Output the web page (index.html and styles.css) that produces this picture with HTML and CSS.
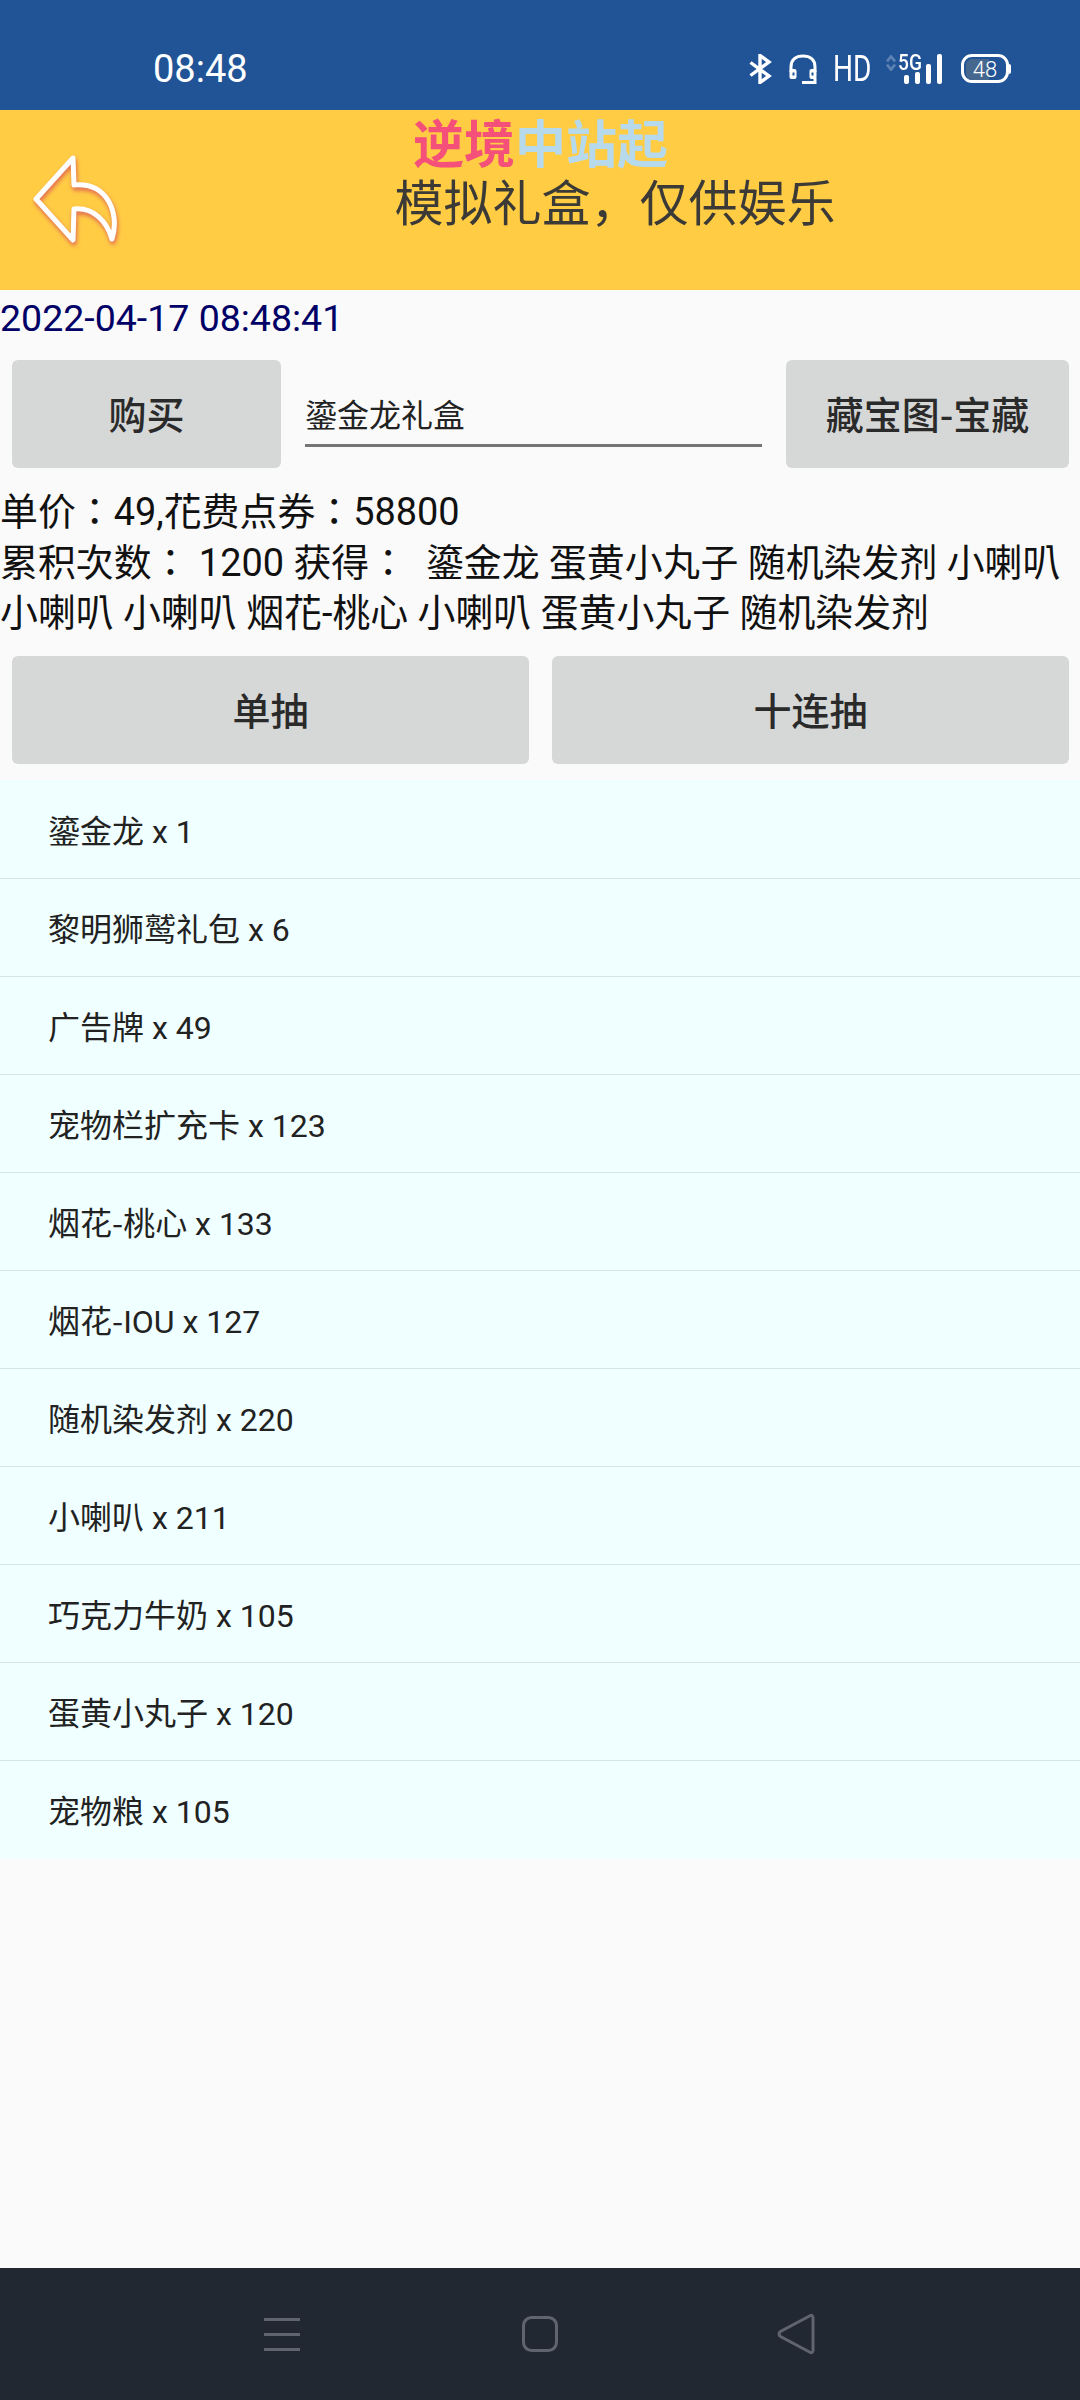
FILE: index.html
```html
<!DOCTYPE html>
<html lang="zh-Hans">
<head>
<meta charset="utf-8">
<title>模拟礼盒</title>
<link rel="stylesheet" href="styles.css">
</head>
<body>
<div class="screen">
  <div class="status">
    <span class="clock">08:48</span>
    <div class="status-icons">
      <svg width="23" height="30" viewBox="0 0 23 30"><path d="M1.5 8.5 L20 22 L11 28.5 V1.5 L20 8 L1.5 21.5" fill="none" stroke="#fff" stroke-width="3.4"/></svg>
      <svg width="28" height="30" viewBox="0 0 28 30"><path d="M2 18 V13 C2 5.500 7 2 14 2 S26 5.500 26 13 V18" fill="none" stroke="#fff" stroke-width="3"/><rect x="0.500" y="15" width="7" height="10" rx="2" fill="#fff"/><rect x="3.500" y="18.500" width="2" height="3" fill="#215497"/><rect x="20.500" y="15" width="7" height="10" rx="2" fill="#fff"/><rect x="22.500" y="18.500" width="2" height="3" fill="#215497"/><path d="M13 28.500 H26 V24" fill="none" stroke="#fff" stroke-width="3"/></svg>
      <span class="hd"><span class="hd-text">HD</span></span>
      <div class="net">
        <svg class="net-arrows" width="10" height="16" viewBox="0 0 10 16"><path d="M1 6.500 L5 1.500 L9 6.500 M1 9.500 L5 14.500 L9 9.500" fill="none" stroke="#5d82b3" stroke-width="2.800"/></svg>
        <span class="fiveg">5G</span>
        <div class="bars">
          <i class="bar b1"></i><i class="bar b2"></i><i class="bar b3"></i><i class="bar b4"></i>
        </div>
      </div>
      <div class="battery"><div class="batt-body"><span class="batt-fill">48</span></div><i class="batt-nub"></i></div>
    </div>
  </div>
  <header class="appbar">
    <svg class="back" width="100" height="100" viewBox="0 0 100 100"><path d="M41 4 L4 45 L41 86 L42 55 C62 53 75 68 80 85 C88 60 76 28 42 31 Z" fill="none" stroke="#fff" stroke-width="5" stroke-linejoin="round"/></svg>
    <div class="brand"><span class="brand-a">逆境</span><span class="brand-b">中站起</span></div>
    <h1 class="title">模拟礼盒，仅供娱乐</h1>
  </header>
  <main class="content">
    <div class="date">2022-04-17 08:48:41</div>
    <div class="buy-row">
      <button class="btn btn-buy">购买</button>
      <div class="field">鎏金龙礼盒</div>
      <button class="btn btn-map">藏宝图<span class="hy">-</span>宝藏</button>
    </div>
    <p class="info" lang="zh-Hant">单价：49,花费点券：58800<br>累积次数： 1200 获得：&nbsp; 鎏金龙 蛋黄小丸子 随机染发剂 小喇叭 小喇叭 小喇叭 烟花-桃心 小喇叭 蛋黄小丸子 随机染发剂</p>
    <div class="draw-row">
      <button class="btn">单抽</button>
      <button class="btn">十连抽</button>
    </div>
    <ul class="list">
      <li>鎏金龙 x 1</li>
      <li>黎明狮鹫礼包 x 6</li>
      <li>广告牌 x 49</li>
      <li>宠物栏扩充卡 x 123</li>
      <li>烟花<span class="hy">-</span>桃心 x 133</li>
      <li>烟花<span class="hy">-</span>IOU x 127</li>
      <li>随机染发剂 x 220</li>
      <li>小喇叭 x 211</li>
      <li>巧克力牛奶 x 105</li>
      <li>蛋黄小丸子 x 120</li>
      <li>宠物粮 x 105</li>
    </ul>
  </main>
  <nav class="navbar">
    <svg width="36" height="33" viewBox="0 0 36 33"><path d="M0 1.500 H36 M0 16.500 H36 M0 31.500 H36" stroke="#5f646e" stroke-width="3"/></svg>
    <svg class="nav-home" width="36" height="36" viewBox="0 0 36 36"><rect x="1.500" y="1.500" width="33" height="33" rx="8" fill="none" stroke="#5f646e" stroke-width="3"/></svg>
    <svg class="nav-back" width="38" height="42" viewBox="0 0 38 42"><path d="M32.500 3 Q36 1 36 5 V37 Q36 41 32.500 39 L3.500 23.500 Q0.500 21 3.500 18.500 Z" fill="none" stroke="#5f646e" stroke-width="3"/></svg>
  </nav>
</div>
</body>
</html>
```
FILE: styles.css
```css
* { box-sizing: border-box; }
html, body { margin: 0; padding: 0; }
body { font-family: Roboto, "Noto Sans CJK SC", sans-serif; background: #fafafa; }
.screen { width: 1080px; height: 2400px; display: flex; flex-direction: column; background: #fafafa; overflow: hidden; }

.status { height: 110px; flex: none; background: #215497; color: #fff; display: flex; align-items: center; justify-content: space-between; padding: 27px 69px 0 153px; }
.clock { font-size: 38px; line-height: 44px; }
.status-icons { display: flex; align-items: center; }
.status-icons > * { flex: none; }
.hd { width: 38px; margin: 0 15px 0 16px; font-size: 36px; line-height: 30px; font-weight: 400; white-space: nowrap; }
.hd-text { display: inline-block; transform: scaleX(.78); transform-origin: left center; }
.status-icons > svg:first-child { margin-right: 17px; }
.net { display: grid; width: 56px; height: 30px; margin-right: 19px; }
.net > * { grid-area: 1 / 1; }
.net-arrows { justify-self: start; align-self: start; margin-top: 1px; }
.fiveg { justify-self: start; align-self: start; margin-left: 12px; font-size: 22px; line-height: 18px; font-weight: 500; transform: scaleX(.87); transform-origin: left center; }
.bars { justify-self: end; align-self: end; display: flex; align-items: flex-end; gap: 6px; }
.bar { display: block; width: 5px; background: #fff; border-radius: 2px; }
.b1 { height: 9px; } .b2 { height: 12px; } .b3 { height: 20px; } .b4 { height: 30px; }
.battery { display: flex; align-items: center; width: 50px; }
.batt-body { width: 48px; height: 29px; border: 3px solid #fff; border-radius: 11px; padding: 2px; }
.batt-fill { display: block; height: 21px; background: linear-gradient(90deg, #46688f 60%, transparent 60%); border-radius: 6px; color: #fff; font-size: 22px; line-height: 21px; text-align: center; font-weight: 300; }
.batt-nub { display: block; width: 2px; height: 10px; background: #fff; border-radius: 0 2px 2px 0; }

.appbar { height: 180px; flex: none; background: #ffcc44; display: grid; grid-template-columns: 150px 1fr; grid-template-rows: 72px 62px 1fr; }
.back { grid-column: 1; grid-row: 1 / 4; margin: 44px 0 0 32px; filter: drop-shadow(1px 3px 2px rgba(215,70,90,.75)); }
.brand { grid-column: 1 / -1; grid-row: 1; justify-self: center; font-size: 51px; line-height: 72px; font-weight: 700; margin-left: 1px; white-space: nowrap; }
.brand-a { color: #f4507a; }
.brand-b { color: #b7d9ec; }
.title { grid-column: 2; grid-row: 2; margin: -8px 0 0; text-align: center; font-size: 49px; line-height: 62px; font-weight: 400; color: #3b3a36; }

.content { flex: 1; min-height: 0; }
.date { height: 70px; font-size: 37.5px; line-height: 56px; color: #000066; white-space: nowrap; }
.buy-row { height: 108px; display: flex; align-items: flex-start; padding: 0 11px 0 12px; }
.btn { height: 108px; border: none; border-radius: 6px; background: #d6d7d7; color: #2a2a2a; font-family: inherit; font-size: 38px; font-weight: 500; padding: 0 0 3px; }
.btn-buy { width: 269px; flex: none; }
.btn-map { width: 283px; flex: none; }
.field { flex: 1; margin: 0 24px; height: 87px; border-bottom: 3px solid #757575; font-size: 32px; line-height: 70px; padding-top: 21px; color: #222; white-space: nowrap; }
.info { margin: 19px 0 0; font-family: Roboto, "Noto Sans CJK TC", sans-serif; font-size: 37.9px; line-height: 50.5px; color: #111; height: 151px; }
.hy { font-family: "Noto Sans CJK SC", sans-serif; line-height: 0; }
.draw-row { display: grid; grid-template-columns: 1fr 1fr; gap: 23px; padding: 0 11px 0 12px; margin-top: 18px; }
.list { list-style: none; margin: 16px 0 0; padding: 1px 0 0; background: #f0ffff; }
.list li { height: 98px; padding-left: 48px; background: #f0ffff; border-bottom: 1px solid #d5e5e5; font-size: 32px; line-height: 102px; color: #222; }
.list li:last-child { border-bottom: none; }

.navbar { height: 132px; flex: none; background: #222832; display: flex; align-items: center; padding-left: 264px; }
.nav-home { margin-left: 222px; }
.nav-back { margin-left: 219px; }
```
